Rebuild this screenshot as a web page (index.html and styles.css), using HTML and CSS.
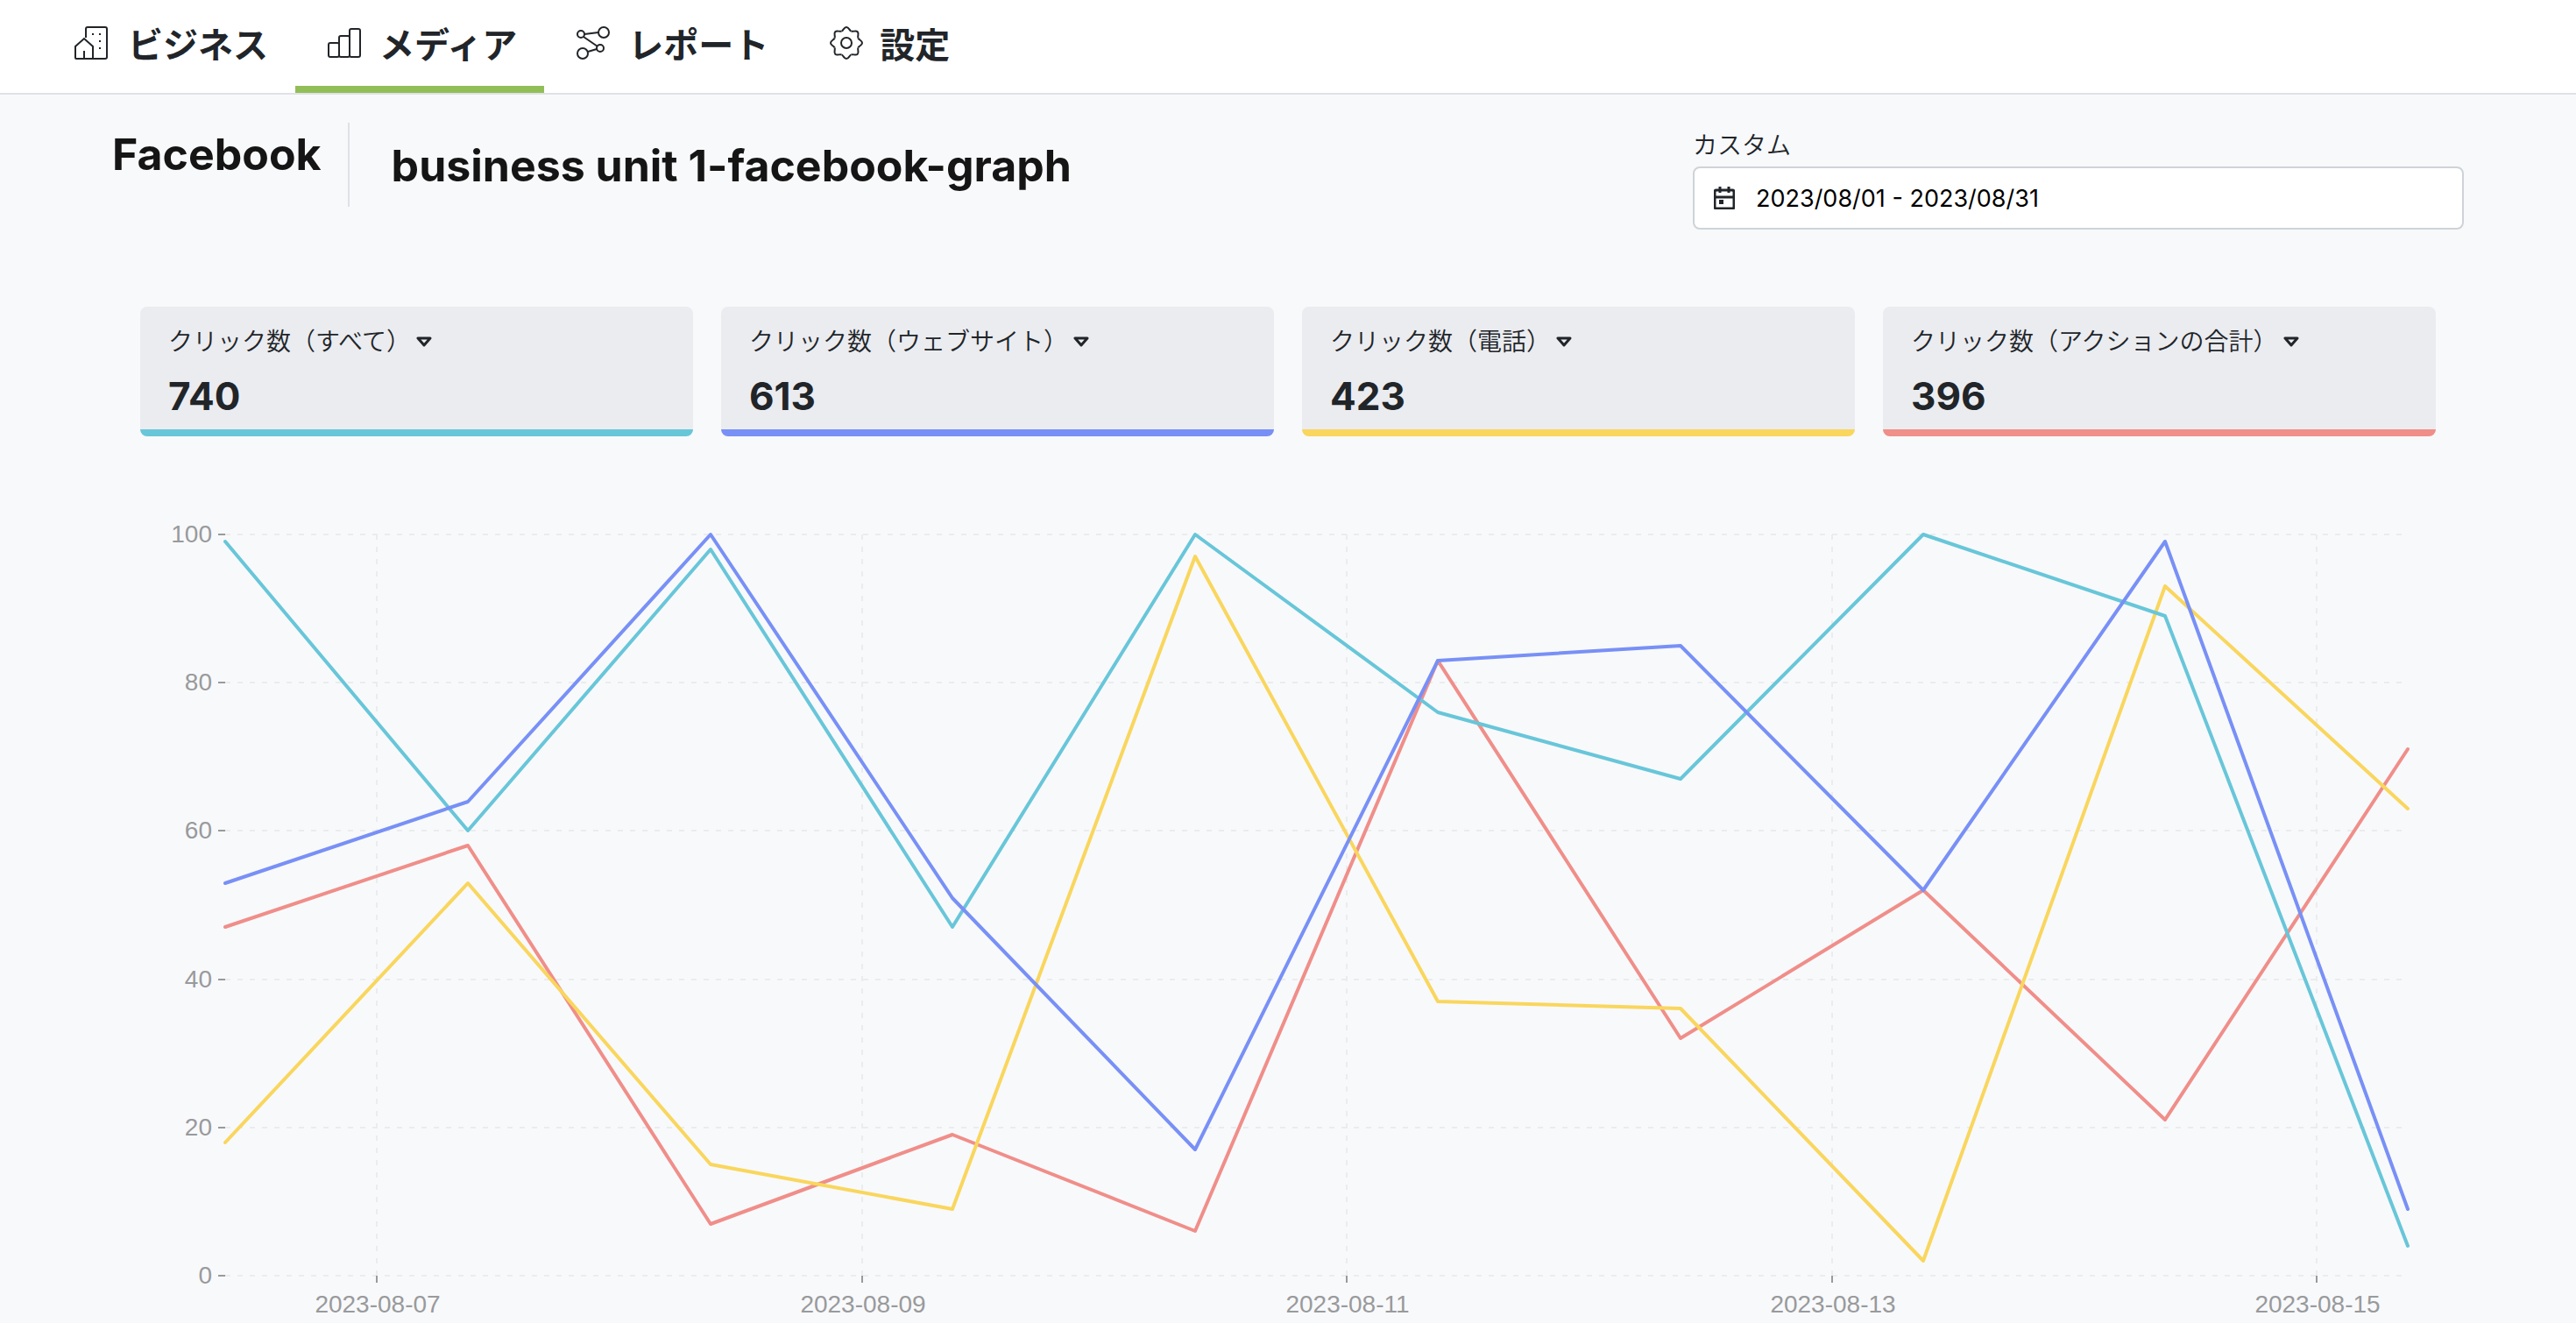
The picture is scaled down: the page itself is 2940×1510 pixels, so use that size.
FILE: index.html
```html
<!DOCTYPE html>
<html lang="ja">
<head>
    <meta charset="UTF-8">
    <meta name="viewport" content="width=device-width, initial-scale=1.0">
    <title>business unit 1-facebook-graph</title>
    <link rel="stylesheet" href="styles.css">
</head>
<body>
    <nav class="navbar">
        <a class="nav-link" href="#business">
            <svg class="nav-icon" viewBox="0 0 44 44" aria-hidden="true">
                <path d="M14 16V6a2 2 0 0 1 2-2h20a2 2 0 0 1 2 2v32a2 2 0 0 1-2 2H22"/>
                <path d="M2 39V26L12 17l10 9v14H3a1 1 0 0 1-1-1z"/>
                <path d="M12 31v9M21 12h2M29 12h2M29 20h2M29 28h2"/>
            </svg>
            ビジネス
        </a>
        <a class="nav-link active" href="#media">
            <svg class="nav-icon" viewBox="0 0 44 44" aria-hidden="true">
                <rect x="4" y="22" width="12" height="16" rx="2"/>
                <rect x="16" y="14" width="12" height="24" rx="2"/>
                <rect x="28" y="6" width="12" height="32" rx="2"/>
            </svg>
            メディア
        </a>
        <a class="nav-link" href="#report">
            <svg class="nav-icon" viewBox="0 0 44 44" aria-hidden="true">
                <circle cx="8" cy="12" r="4"/>
                <circle cx="34" cy="10" r="6"/>
                <circle cx="30" cy="28" r="4"/>
                <circle cx="10" cy="34" r="6"/>
                <path d="M12 12l16-2M11 15l16 11M26 29l-10 3"/>
            </svg>
            レポート
        </a>
        <a class="nav-link" href="#settings">
            <svg class="nav-icon" viewBox="0 0 44 44" aria-hidden="true">
                <defs>
                    <path id="tooth" d="M-5.5-13.4C-3.2-14.4-2.9-18 0-18S3.2-14.4 5.5-13.4"/>
                </defs>
                <g transform="translate(24 22)">
                    <circle r="6"/>
                    <use href="#tooth"/>
                    <use href="#tooth" transform="rotate(45)"/>
                    <use href="#tooth" transform="rotate(90)"/>
                    <use href="#tooth" transform="rotate(135)"/>
                    <use href="#tooth" transform="rotate(180)"/>
                    <use href="#tooth" transform="rotate(225)"/>
                    <use href="#tooth" transform="rotate(270)"/>
                    <use href="#tooth" transform="rotate(315)"/>
                </g>
            </svg>
            設定
        </a>
    </nav>

    <main class="page">
        <header class="page-header">
            <h2 class="media-name">Facebook</h2>
            <h1 class="unit-name">business unit 1-facebook-graph</h1>
            <div class="date-filter">
                <label for="dateRange">カスタム</label>
                <div class="date-box">
                    <svg class="date-icon" viewBox="0 0 24 26" aria-hidden="true">
                        <rect x="1" y="4" width="22" height="21" rx="2"/>
                        <path d="M1 12h22M7 0v7M17 0v7"/>
                        <rect class="day" x="6" y="15" width="5" height="5"/>
                    </svg>
                    <input type="text" id="dateRange" value="2023/08/01 - 2023/08/31">
                </div>
            </div>
        </header>

        <section class="cards">
            <div class="card teal">
                <button type="button" class="metric">クリック数（すべて）<svg class="caret" viewBox="0 0 18 12" aria-hidden="true"><path d="M2 2h14L9 10z"/></svg></button>
                <p class="value">740</p>
            </div>
            <div class="card indigo">
                <button type="button" class="metric">クリック数（ウェブサイト）<svg class="caret" viewBox="0 0 18 12" aria-hidden="true"><path d="M2 2h14L9 10z"/></svg></button>
                <p class="value">613</p>
            </div>
            <div class="card yellow">
                <button type="button" class="metric">クリック数（電話）<svg class="caret" viewBox="0 0 18 12" aria-hidden="true"><path d="M2 2h14L9 10z"/></svg></button>
                <p class="value">423</p>
            </div>
            <div class="card red">
                <button type="button" class="metric">クリック数（アクションの合計）<svg class="caret" viewBox="0 0 18 12" aria-hidden="true"><path d="M2 2h14L9 10z"/></svg></button>
                <p class="value">396</p>
            </div>
        </section>

        <svg class="chart" viewBox="0 0 2620 950" role="img">
            <g transform="translate(97 50)">
                <g class="grid">
                    <path d="M0 0H2491M0 169H2491M0 338H2491M0 508H2491M0 677H2491M0 846H2491"/>
                    <path d="M173 0V846M727 0V846M1280 0V846M1834 0V846M2387 0V846"/>
                </g>
                <g class="ticks">
                    <path d="M-8 0H0M-8 169H0M-8 338H0M-8 508H0M-8 677H0M-8 846H0"/>
                    <path d="M173 846v8M727 846v8M1280 846v8M1834 846v8M2387 846v8"/>
                </g>
                <g class="y-labels">
                    <text x="-15" y="9">100</text>
                    <text x="-15" y="178">80</text>
                    <text x="-15" y="347">60</text>
                    <text x="-15" y="517">40</text>
                    <text x="-15" y="686">20</text>
                    <text x="-15" y="855">0</text>
                </g>
                <g class="x-labels">
                    <text x="174" y="888">2023-08-07</text>
                    <text x="728" y="888">2023-08-09</text>
                    <text x="1281" y="888">2023-08-11</text>
                    <text x="1835" y="888">2023-08-13</text>
                    <text x="2388" y="888">2023-08-15</text>
                </g>
                <polyline class="line red" points="0,448 277,355 554,787 830,685 1107,795 1384,144 1661,575 1938,406 2214,668 2491,245"/>
                <polyline class="line yellow" points="0,694 277,398 554,719 830,770 1107,25 1384,533 1661,541 1938,829 2214,59 2491,313"/>
                <polyline class="line teal" points="0,8 277,338 554,17 830,448 1107,0 1384,203 1661,279 1938,0 2214,93 2491,812"/>
                <polyline class="line indigo" points="0,398 277,305 554,0 830,415 1107,702 1384,144 1661,127 1938,406 2214,8 2491,770"/>
            </g>
        </svg>
    </main>
</body>
</html>
```

FILE: styles.css
```css
* {
    margin: 0;
    padding: 0;
    box-sizing: border-box;
}

body {
    background-color: #f8f9fb;
    color: #212529;
    font-family: Inter, "Noto Sans CJK JP", sans-serif;
    font-size: 28px;
}

/* Top navigation */
.navbar {
    display: flex;
    padding-left: 50px;
    background-color: #fff;
    border-bottom: 2px solid #e0e1e7;
}

.nav-link {
    display: flex;
    align-items: center;
    gap: 18px;
    height: 106px;
    padding: 0 31px 0 34px;
    border-bottom: 8px solid transparent;
    color: #212529;
    font-family: "Noto Sans CJK JP", sans-serif;
    font-size: 40px;
    font-weight: 700;
    text-decoration: none;
}

.nav-link.active {
    border-bottom-color: #92be57;
}

.nav-icon {
    width: 44px;
    height: 44px;
    fill: none;
    stroke: #212529;
    stroke-width: 2;
}

.page {
    padding: 32px 128px 0;
}

/* Titles and date range */
.page-header {
    display: flex;
    align-items: flex-start;
}

.media-name,
.unit-name {
    color: #151515;
    font-size: 50px;
    font-weight: 700;
    line-height: 60px;
}

.media-name {
    height: 96px;
    padding: 6px 30px 0 0;
    border-right: 2px solid #e0e1e7;
}

.unit-name {
    padding: 19px 0 0 48px;
}

.date-filter {
    width: 33%;
    max-width: 880px;
    margin-left: auto;
    padding-top: 4px;
}

.date-filter label {
    display: block;
    padding-bottom: 6px;
    font-family: "Noto Sans CJK JP", sans-serif;
    font-weight: 350;
    line-height: 40px;
}

.date-box {
    display: flex;
    align-items: center;
    gap: 24px;
    height: 72px;
    padding: 0 22px;
    background-color: #fff;
    border: 2px solid #ced3d7;
    border-radius: 8px;
}

.date-icon {
    width: 24px;
    height: 26px;
    fill: none;
    stroke: #212529;
    stroke-width: 3;
}

.date-icon .day {
    fill: #212529;
    stroke: none;
}

.date-box input {
    flex: 1;
    border: none;
    outline: none;
    background: none;
    color: #000;
    font: inherit;
    font-size: 27px;
}

/* Metric cards */
.cards {
    display: grid;
    grid-template-columns: repeat(4, 1fr);
    gap: 32px;
    padding: 88px 32px 0;
}

.card {
    padding: 18px 32px 10px;
    background-color: #ebecf0;
    border-bottom: 8px solid;
    border-radius: 8px;
}

.card.teal {
    border-color: #68c6d9;
}

.card.indigo {
    border-color: #7890f6;
}

.card.yellow {
    border-color: #f9d65d;
}

.card.red {
    border-color: #f08e89;
}

.metric {
    display: flex;
    align-items: center;
    gap: 6px;
    border: none;
    background: none;
    color: #212529;
    font-family: "Noto Sans CJK JP", sans-serif;
    font-size: 28px;
    font-weight: 350;
    line-height: 40px;
}

.caret {
    width: 18px;
    height: 12px;
    margin-top: 4px;
    fill: none;
    stroke: #212529;
    stroke-width: 3;
    stroke-linejoin: round;
}

.value {
    padding-top: 16px;
    font-size: 44px;
    font-weight: 700;
    line-height: 56px;
}

/* Line chart */
.chart {
    display: block;
    width: calc(100% - 64px);
    margin: 62px 32px 0;
}

.grid {
    stroke: #ebecee;
    stroke-width: 2;
    stroke-dasharray: 6 8;
}

.ticks {
    stroke: #999a9c;
    stroke-width: 2;
}

.y-labels,
.x-labels {
    fill: #999a9c;
    font-family: "Liberation Sans", sans-serif;
    font-size: 28px;
}

.y-labels {
    text-anchor: end;
}

.x-labels {
    text-anchor: middle;
}

.line {
    fill: none;
    stroke-width: 4;
    stroke-linecap: round;
    stroke-linejoin: round;
}

.line.teal {
    stroke: #68c6d9;
}

.line.indigo {
    stroke: #7890f6;
}

.line.yellow {
    stroke: #f9d65d;
}

.line.red {
    stroke: #f08e89;
}
```
